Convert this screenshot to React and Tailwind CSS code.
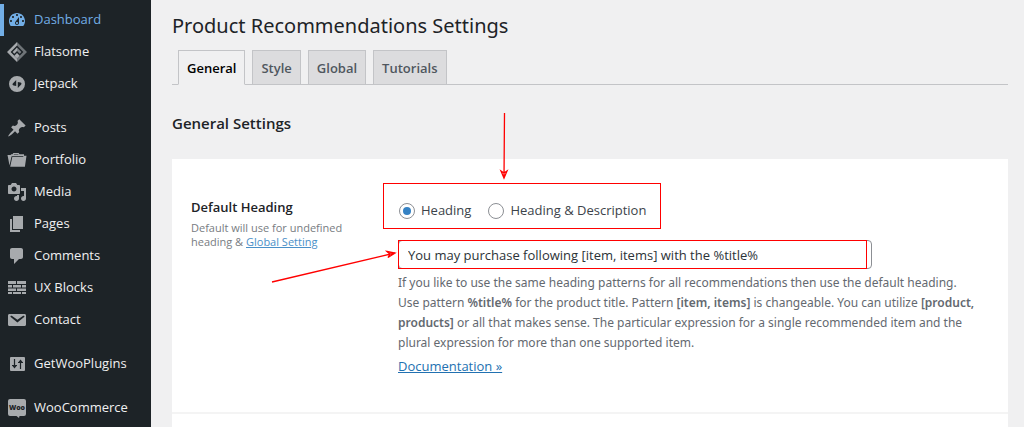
import React, { useState } from 'react'

const Dash = ({ d }) => (
  <svg viewBox="0 0 20 20" className="h-5 w-5" fill="currentColor" aria-hidden="true">
    <path d={d} fillRule="evenodd" />
  </svg>
)

const icons = {
  dashboard: <Dash d="M3.76 16h12.48c1.1-1.37 1.76-3.11 1.76-5 0-4.42-3.58-8-8-8s-8 3.58-8 8c0 1.89.66 3.63 1.76 5zM10 4c.55 0 1 .45 1 1s-.45 1-1 1-1-.45-1-1 .45-1 1-1zM6 6c.55 0 1 .45 1 1s-.45 1-1 1-1-.45-1-1 .45-1 1-1zm8 0c.55 0 1 .45 1 1s-.45 1-1 1-1-.45-1-1 .45-1 1-1zm-5.37 5.55L12 7v6c0 1.1-.9 2-2 2s-2-.9-2-2c0-.57.24-1.08.63-1.45zM4 10c.55 0 1 .45 1 1s-.45 1-1 1-1-.45-1-1 .45-1 1-1zm12 0c.55 0 1 .45 1 1s-.45 1-1 1-1-.45-1-1 .45-1 1-1zm-5 3c0-.55-.45-1-1-1s-1 .45-1 1 .45 1 1 1 1-.45 1-1z" />,
  flatsome: (
    <svg viewBox="0 0 20 20" className="h-5 w-5" aria-hidden="true">
      <path d="M10 0L0 10l10 10v-3.600L3.600 10 10 3.600z" fill="#a7aaad" />
      <path d="M10 0l10 10-10 10v-3.600l6.400-6.400L10 3.600z" fill="#6f7478" />
      <path d="M5.600 10L10 5.600v3.400l-2.700 2.700z" fill="#a7aaad" />
      <path d="M10 5.600l4.400 4.400-1.700 1.700L10 9z" fill="#7d8286" />
      <path d="M10 11l2.700 2.700L10 16.400l-2.700-2.700z" fill="#a7aaad" />
    </svg>
  ),
  jetpack: <Dash d="M10 2a8 8 0 1 0 0 16 8 8 0 0 0 0-16zM9.200 6v6L6.600 11.400c-1.200-.3-1.300-1-.8-1.900zM10.800 14V8l2.600.6c1.200.3 1.300 1 .8 1.900z" />,
  posts: <Dash d="M10.44 3.02l1.82-1.82 6.36 6.35-1.83 1.82c-1.05-.68-2.48-.57-3.41.36l-.75.75c-.92.93-1.04 2.35-.35 3.41l-1.83 1.82-2.41-2.41-2.8 2.79c-.42.42-3.38 2.71-3.8 2.29s1.86-3.39 2.28-3.81l2.79-2.79L4.1 9.36l1.83-1.82c1.05.69 2.48.57 3.4-.36l.75-.75c.93-.92 1.05-2.35.36-3.41z" />,
  portfolio: <Dash d="M4 4.200h1.500l.9-1.200h5.200l.9 1.200H17v1.600h2.500L17.900 16.700H3.200L5.300 7h11V6.200H4.600L2.500 15.500.5 5h3.200zM7 4l-.3.600h4.800L11.200 4z" />,
  media: <Dash d="M13 11V4c0-.55-.45-1-1-1h-1.67L9 1H5L3.67 3H2c-.55 0-1 .45-1 1v7c0 .55.45 1 1 1h10c.55 0 1-.45 1-1zM7 4.500c1.380 0 2.500 1.120 2.500 2.500S8.380 9.500 7 9.500 4.500 8.380 4.500 7 5.620 4.500 7 4.500zM14 6h5v10.500c0 1.380-1.120 2.500-2.500 2.500S14 17.880 14 16.500s1.120-2.500 2.500-2.500c.17 0 .34.020.5.050V9h-3V6zm-4 8.050V13h2v3.500c0 1.380-1.120 2.500-2.500 2.500S7 17.880 7 16.500 8.120 14 9.500 14c.17 0 .34.020.5.050z" />,
  pages: <Dash d="M6 15V2h10v13H6zm-1 1h8v2H3V5h2v11z" />,
  comments: <Dash d="M5 2h9c1.100 0 2 .9 2 2v7c0 1.100-.9 2-2 2h-2l-5 5v-5H5c-1.100 0-2-.9-2-2V4c0-1.100.9-2 2-2z" />,
  blocks: <Dash d="M1 3h8v3H1zM10 3h9v3h-9zM1 7h4v2.500H1zM6 7h8v2.500H6zM15 7h4v2.500h-4zM1 10.500h8V13H1zM10 10.500h9V13h-9zM1 14h4v2H1zM6 14h8v2H6zM15 14h4v2h-4z" />,
  contact: <Dash d="M2.500 4h15c.9 0 1.500.6 1.500 1.500v9c0 .9-.6 1.500-1.500 1.500h-15c-.9 0-1.500-.6-1.500-1.500v-9C1 4.600 1.600 4 2.500 4zm7.900 8.600l6.800-5.500c.3-.3.400-.7.100-1.100-.3-.4-.8-.4-1.100-.2L10.400 9.700 4.800 5.800c-.4-.2-.9-.2-1.200.2-.3.400-.1.800.1 1.100z" />,
  plugins: (
    <svg viewBox="0 0 20 20" className="h-5 w-5" aria-hidden="true">
      <rect x="3" y="3" width="15" height="14" rx="1" fill="#a7aaad" />
      <path d="M7.500 5v8M5 11.500h5M13.500 7v8M11 8.500h5" stroke="#1d2327" strokeWidth="1.200" fill="none" />
      <path d="M5.500 12h4l-2 2.500zM11.500 8h4l-2-2.500z" fill="#1d2327" />
    </svg>
  ),
  woo: (
    <svg viewBox="0 0 20 20" className="h-5 w-5" aria-hidden="true">
      <path d="M3 1h14a2 2 0 0 1 2 2v13a2 2 0 0 1-2 2h-4.500l-.5 2-2.500-2H3a2 2 0 0 1-2-2V3a2 2 0 0 1 2-2z" fill="#a7aaad" />
      <text x="10" y="12" textAnchor="middle" fontSize="7" fontWeight="800" fontFamily="Open Sans" fill="#1d2327">Woo</text>
    </svg>
  ),
}

const menu = [
  [
    { label: 'Dashboard', icon: 'dashboard' },
    { label: 'Flatsome', icon: 'flatsome' },
    { label: 'Jetpack', icon: 'jetpack' },
  ],
  [
    { label: 'Posts', icon: 'posts' },
    { label: 'Portfolio', icon: 'portfolio' },
    { label: 'Media', icon: 'media' },
    { label: 'Pages', icon: 'pages' },
    { label: 'Comments', icon: 'comments' },
    { label: 'UX Blocks', icon: 'blocks' },
    { label: 'Contact', icon: 'contact' },
  ],
  [{ label: 'GetWooPlugins', icon: 'plugins' }],
  [{ label: 'WooCommerce', icon: 'woo' }],
]

const tabs = ['General', 'Style', 'Global', 'Tutorials']

const radioClass =
  "grid h-4 w-4 shrink-0 appearance-none place-items-center rounded-full border border-[#8c8f94] bg-white before:h-2 before:w-2 before:rounded-full before:content-[''] checked:before:bg-[#3582c4]"

const Sidebar = () => (
  <nav className="flex w-[151px] shrink-0 flex-col gap-3 bg-[#1d2327] pt-1 text-[13px] text-[#f0f0f1]">
    {menu.map((group, i) => (
      <ul key={i}>
        {group.map((item) => {
          const active = item.label === 'Dashboard'
          return (
            <li key={item.label}>
              <a
                href="#"
                className={`flex h-8 items-center gap-[7px] border-l-4 pl-[3px] ${active ? 'border-[#72aee6] text-[#72aee6]' : 'border-transparent'}`}
              >
                <span className={active ? '' : 'text-[#a7aaad]'}>{icons[item.icon]}</span>
                {item.label}
              </a>
            </li>
          )
        })}
      </ul>
    ))}
  </nav>
)

const App = () => {
  const [tab, setTab] = useState('General')
  const [mode, setMode] = useState('heading')
  const [pattern, setPattern] = useState('You may purchase following [item, items] with the %title%')

  return (
    <div className="flex min-h-screen bg-[#f0f0f1] font-['Open_Sans',sans-serif] text-[#3c434a]">
      <Sidebar />
      <main className="flex min-w-0 flex-1 flex-col pr-4 pl-[21px]">
        <h1 className="pt-[10px] font-['Noto_Sans',sans-serif] text-xl leading-8 text-[#1d2327]">
          Product Recommendations Settings
        </h1>

        {/* Tabs */}
        <div className="mt-2 flex gap-[7px] border-b border-[#c3c4c7] pl-[6px]">
          {tabs.map((name) => (
            <button
              key={name}
              type="button"
              onClick={() => setTab(name)}
              className={`-mb-px h-[35px] border border-[#c3c4c7] px-2 pt-[2px] text-[13px] font-semibold ${tab === name ? 'border-b-[#f0f0f1] bg-[#f0f0f1] text-black' : 'bg-[#dcdcde] text-[#50575e]'}`}
            >
              {name}
            </button>
          ))}
        </div>

        <h2 className="mt-7 text-[15px] leading-5 font-semibold text-[#1d2327]">General Settings</h2>

        {/* Settings card */}
        <div className="mt-[26px] flex-1 bg-white">
          <section className="flex border-b-2 border-[#f4f4f4] pt-6 pb-9 pl-[19px]">
            <div className="w-[192px] shrink-0 pt-[14px]">
              <h3 className="text-[13px] leading-5 font-semibold text-[#1d2327]">Default Heading</h3>
              <p className="mt-1 text-[11px] leading-[14px] text-[#787c82]">
                Default will use for undefined
                <br />
                heading &amp; <a href="#" className="text-[#4a90c8] underline">Global Setting</a>
              </p>
            </div>

            <div className="min-w-0 flex-1">
              <fieldset className="relative flex h-[46px] w-[278px] items-center gap-[17px] border border-[#f00] pt-[10px] pl-[15px] text-[13px]">
                <svg className="absolute bottom-full left-[110px] mb-1 h-[68px] w-5" viewBox="0 0 20 68" fill="none" stroke="#f00" strokeWidth="1.300" aria-hidden="true">
                  <path d="M10.500 1L10 66M7 59l3 7 3-7-3 2z" />
                </svg>
                <label className="flex items-center gap-[6px]">
                  <input type="radio" name="mode" checked={mode === 'heading'} onChange={() => setMode('heading')} className={radioClass} />
                  Heading
                </label>
                <label className="flex items-center gap-[6px]">
                  <input type="radio" name="mode" checked={mode === 'both'} onChange={() => setMode('both')} className={radioClass} />
                  Heading &amp; Description
                </label>
              </fieldset>

              <div className="mt-[11px] pl-[15px]">
                <div className="relative max-w-[474px]">
                  <input
                    type="text"
                    aria-label="Heading pattern"
                    value={pattern}
                    onChange={(e) => setPattern(e.target.value)}
                    className="block h-[29px] w-full rounded border border-[#8c8f94] bg-white px-[9px] text-[13px] text-[#2c3338]"
                  />
                  <div className="pointer-events-none absolute inset-y-0 right-[5px] left-0 border border-[#f00]" />
                  <svg className="absolute top-2 right-full h-9 w-[128px]" viewBox="0 0 128 36" fill="none" stroke="#f00" strokeWidth="1.300" aria-hidden="true">
                    <path d="M2 34L125 5M117 3.500l8 1.500-7 4.500 2-3.300z" />
                  </svg>
                </div>
                <p className="mt-1 font-['Noto_Sans',sans-serif] text-xs leading-5 text-[#646970]">
                  If you like to use the same heading patterns for all recommendations then use the default heading.
                  <br />
                  Use pattern <strong className="font-semibold">%title%</strong> for the product title. Pattern{' '}
                  <strong className="font-semibold">[item, items]</strong> is changeable. You can utilize{' '}
                  <strong className="font-semibold">[product,</strong>
                  <br />
                  <strong className="font-semibold">products]</strong> or all that makes sense. The particular
                  expression for a single recommended item and the
                  <br />
                  plural expression for more than one supported item.
                </p>
                <p className="mt-[3px] text-[13px] leading-5">
                  <a href="#" className="text-[#2271b1] underline">Documentation »</a>
                </p>
              </div>
            </div>
          </section>
        </div>
      </main>
    </div>
  )
}

export default App
